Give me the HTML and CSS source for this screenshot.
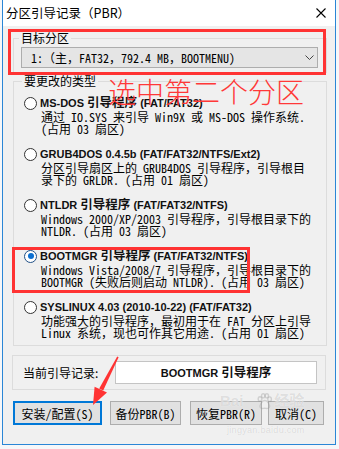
FILE: index.html
```html
<!DOCTYPE html>
<html lang="zh-CN">
<head>
<meta charset="utf-8">
<title>分区引导记录（PBR）</title>
<link rel="stylesheet" href="styles.css">
</head>
<body>
<div class="window">
  <div class="titlebar">
    <span class="title">分区引导记录（PBR）</span>
    <svg class="close" width="10" height="10" viewBox="0 0 10 10"><path d="M0.5 0.5L9.5 9.5M9.5 0.5L0.5 9.5" stroke="#000" stroke-width="1.1" fill="none"/></svg>
  </div>
  <div class="client">
    <fieldset class="group g-target">
      <legend>目标分区</legend>
      <div class="combo">
        <span class="mono">1:（主，FAT32，792.4 MB，BOOTMENU)</span>
        <svg class="chev" width="9" height="5" viewBox="0 0 9 5"><path d="M0.5 0.5L4.5 4.5L8.5 0.5" stroke="#444" stroke-width="1" fill="none"/></svg>
      </div>
    </fieldset>

    <fieldset class="group g-type">
      <legend>要更改的类型</legend>
      <div class="items">
        <div class="item">
          <span class="radio"></span>
          <div class="itext">
            <div class="ititle">MS-DOS <span class="cj">引导程序</span> (FAT/FAT32)</div>
            <div class="desc">通过 IO.SYS 来引导 Win9X 或 MS-DOS 操作系统.</div>
            <div class="desc">(占用 03 扇区)</div>
          </div>
        </div>
        <div class="item">
          <span class="radio"></span>
          <div class="itext">
            <div class="ititle">GRUB4DOS 0.4.5b (FAT/FAT32/NTFS/Ext2)</div>
            <div class="desc">分区引导扇区上的 GRUB4DOS 引导程序，引导根目</div>
            <div class="desc">录下的 GRLDR. (占用 01 扇区)</div>
          </div>
        </div>
        <div class="item">
          <span class="radio"></span>
          <div class="itext">
            <div class="ititle">NTLDR <span class="cj">引导程序</span> (FAT/FAT32/NTFS)</div>
            <div class="desc">Windows 2000/XP/2003 引导程序，引导根目录下的</div>
            <div class="desc">NTLDR. (占用 03 扇区)</div>
          </div>
        </div>
        <div class="item">
          <span class="radio on"></span>
          <div class="itext">
            <div class="ititle">BOOTMGR <span class="cj">引导程序</span> (FAT/FAT32/NTFS)</div>
            <div class="desc">Windows Vista/2008/7 引导程序，引导根目录下的</div>
            <div class="desc">BOOTMGR (失败后则启动 NTLDR). (占用 03 扇区)</div>
          </div>
        </div>
        <div class="item">
          <span class="radio"></span>
          <div class="itext">
            <div class="ititle">SYSLINUX 4.03 (2010-10-22) (FAT/FAT32)</div>
            <div class="desc">功能强大的引导程序，最初用于在 FAT 分区上引导</div>
            <div class="desc">Linux 系统，现也可作其它用途. (占用 01 扇区)</div>
          </div>
        </div>
      </div>
    </fieldset>

    <div class="current">
      <span class="cur-label">当前引导记录:</span>
      <div class="cur-field"><span>BOOTMGR <span class="cj">引导程序</span></span></div>
    </div>

    <div class="buttons">
      <button class="btn b1">安装/配置(S)</button>
      <button class="btn b2">备份PBR(B)</button>
      <button class="btn b3">恢复PBR(R)</button>
      <button class="btn b4">取消(C)</button>
    </div>
  </div>
</div>

<!-- annotation overlays -->
<div class="mark mark1"></div>
<div class="mark mark2"></div>
<div class="note">选中第二个分区</div>
<svg class="arrow" width="339" height="449" viewBox="0 0 339 449">
  <polygon points="117.2,356.5 118.6,357.2 103.2,390.5 99.2,388.6" fill="#f33"/>
  <polygon points="93,405 94.6,386.8 107,392.6" fill="#f33"/>
</svg>
<div class="wm">
  <div class="wm-top"><span>Bai</span><svg width="17" height="17" viewBox="0 0 17 17"><g fill="none" stroke="rgba(150,150,150,0.35)" stroke-width="1.4"><ellipse cx="4" cy="6" rx="1.8" ry="2.3"/><ellipse cx="7.2" cy="2.8" rx="1.7" ry="2.1"/><ellipse cx="10.8" cy="2.8" rx="1.7" ry="2.1"/><ellipse cx="13.6" cy="6.2" rx="1.8" ry="2.3"/><path d="M8.8 7.5c-3 0-5.5 5-4.5 7 1 1.6 3 .8 4.5.8s3.5.8 4.5-.8c1-2-1.5-7-4.5-7z"/></g></svg><span>经验</span></div>
  <div class="wm-url">jingyan.baidu.com</div>
</div>
</body>
</html>
```

FILE: styles.css
```css
* { box-sizing: border-box; }
html, body { margin: 0; padding: 0; }
body {
  width: 339px;
  height: 449px;
  overflow: hidden;
  position: relative;
  background: #f6f7f9;
  font-family: "Noto Sans CJK SC", "Liberation Sans", sans-serif;
  font-size: 12px;
  color: #000;
}

.window {
  margin-left: 2px;
  width: 334px;
  height: 445px;
  border: 1px solid #2a86d6;
  border-top: 0;
  background: #f0f0f0;
  display: flex;
  flex-direction: column;
}

.titlebar {
  flex: none;
  height: 26px;
  background: #fff;
  display: flex;
  align-items: center;
  justify-content: space-between;
  padding: 0 9px 0 3px;
}
.title { font-size: 12.5px; line-height: 16px; color: #000; }
.close { display: block; }

.client {
  flex: 1;
  display: flex;
  flex-direction: column;
  padding-top: 4px;
}

fieldset.group {
  margin: 0 0 0 10px;
  width: 314px;
  min-inline-size: 0;
  border: 1px solid #dcdcdc;
}
fieldset.group legend {
  padding: 0 2px;
  margin-left: -2px;
  font-size: 12px;
  line-height: 16px;
}

.g-target { padding: 1px 8px 4px 7px; }
.combo {
  height: 21px;
  border: 1px solid #adadad;
  background: #e5e5e5;
  display: flex;
  align-items: center;
  justify-content: space-between;
  padding: 0 3px 0 9px;
}
.mono, .desc, .btn {
  font-family: "Noto Sans Mono CJK SC", "Liberation Mono", "Noto Sans CJK SC", monospace;
}
.mono { font-size: 12px; line-height: 14px; white-space: nowrap; }
.chev { display: block; }

.g-type { margin-top: 7px; padding: 6px 0 6px 10px; }
.items { display: flex; flex-direction: column; gap: 11px; }
.item { display: flex; align-items: flex-start; }
.radio {
  flex: none;
  position: relative;
  width: 13px;
  height: 13px;
  margin: 1.5px 3px 0 0;
  border: 1px solid #333;
  border-radius: 50%;
  background: #fff;
}
.radio.on { border-color: #1f4f86; }
.radio.on::after {
  content: "";
  position: absolute;
  left: 2.5px;
  top: 2.5px;
  width: 6px;
  height: 6px;
  border-radius: 50%;
  background: #0a6fd1;
}
.ititle, .cur-field {
  font-family: "Liberation Sans", "Noto Sans CJK SC", sans-serif;
  font-weight: bold;
  font-size: 11px;
  line-height: 16px;
  white-space: nowrap;
  color: #111;
}
.cj { font-size: 12.5px; }
.desc {
  font-size: 12px;
  line-height: 12px;
  padding-left: 1px;
  white-space: nowrap;
}

.current {
  margin: 9px 0 0 9px;
  width: 314px;
  height: 35px;
  border: 1px solid #dcdcdc;
  display: flex;
  align-items: center;
  justify-content: space-between;
  padding: 0 8px 0 10px;
}
.cur-label { font-size: 12px; line-height: 16px; }
.cur-field {
  width: 202px;
  height: 23px;
  background: #fff;
  border: 1px solid #c4c4c4;
  display: flex;
  align-items: center;
  justify-content: center;
}

.buttons { display: flex; margin: 11px 0 0 10px; }
.btn {
  height: 24px;
  padding: 0;
  border: 1px solid #adadad;
  background: #e1e1e1;
  font-size: 12px;
  color: #000;
  white-space: nowrap;
}
.b1 { width: 89px; border: 2px solid #0078d7; }
.b2 { width: 71px; margin-left: 8px; }
.b3 { width: 72px; margin-left: 9px; }
.b4 { width: 56px; margin-left: 6px; }

/* annotation overlays */
.mark { position: absolute; border: 3px solid #f33; }
.mark1 { left: 8px; top: 29px; width: 318px; height: 46px; }
.mark2 { left: 12px; top: 247px; width: 238px; height: 46px; }
.note {
  position: absolute;
  left: 108px;
  top: 76px;
  font-size: 28px;
  line-height: 30px;
  font-weight: 300;
  color: #ff3838;
  white-space: nowrap;
}
.arrow { position: absolute; left: 0; top: 0; pointer-events: none; }

.wm {
  position: absolute;
  left: 220px;
  top: 392px;
  color: rgba(150, 150, 150, 0.3);
  text-shadow: 0 0 1px rgba(255, 255, 255, 0.9);
  font-family: "Liberation Sans", "Noto Sans CJK SC", sans-serif;
  pointer-events: none;
}
.wm-top { display: flex; align-items: center; gap: 1px; font-size: 15px; font-weight: bold; line-height: 18px; }
.wm-top span:first-child { margin-right: 12px; }
.wm-url { font-size: 9px; line-height: 12px; margin: 14px 0 0 7px; letter-spacing: 0.3px; }
```
